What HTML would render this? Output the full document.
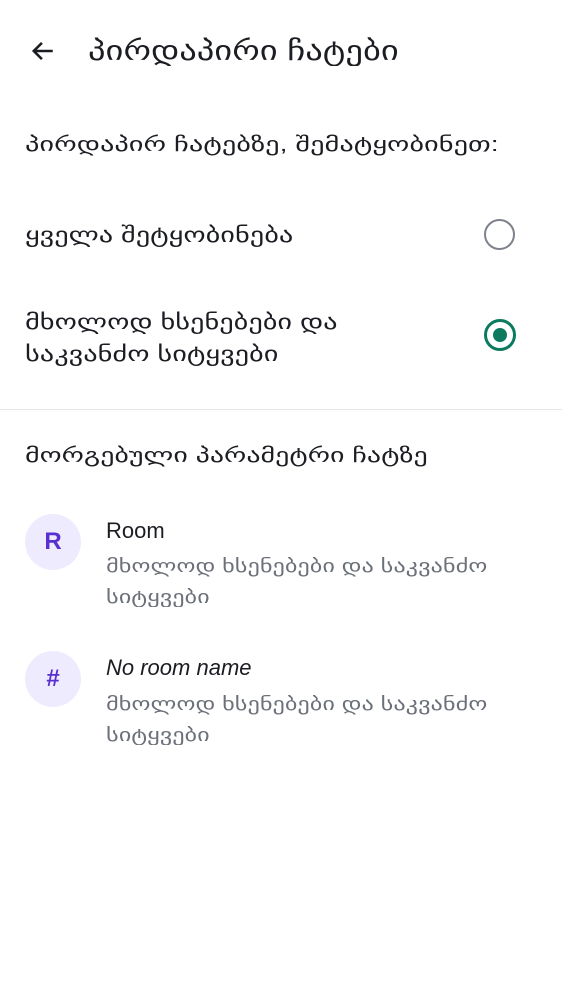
<!DOCTYPE html>
<html><head><meta charset="utf-8"><style>
body{margin:0;width:562px;height:1000px;background:#fff;font-family:"Liberation Sans","DejaVu Sans",sans-serif;color:#1b1d22;position:relative;overflow:hidden}
.a{position:absolute;white-space:nowrap}
.g{transform-origin:0 0}
.t{font-size:22px}
.s{font-size:18px;color:#6b7079;line-height:31px}
.av{position:absolute;left:25px;width:56px;height:56px;border-radius:50%;background:#efebff;color:#5a2fd0;font-weight:bold;font-size:24px;text-align:center;line-height:56px}
</style></head><body>
<svg class="a" style="left:30px;top:38px" width="26" height="26" viewBox="0 0 24 24"><path d="M21 12H4M11 4.5L3.5 12 11 19.5" stroke="#1b1d22" stroke-width="2.4" fill="none"/></svg>
<div class="a g" style="left:88px;top:36px;font-size:27px;transform:scaleX(1.28)">პირდაპირი ჩატები</div>
<div class="a g" style="left:25px;top:132px;font-size:20px;transform:scaleX(1.42)">პირდაპირ ჩატებზე, შემატყობინეთ:</div>
<div class="a g" style="left:25px;top:223px;font-size:21px;transform:scaleX(1.35)">ყველა შეტყობინება</div>
<div class="a" style="left:484px;top:219px;width:31px;height:31px;border:2.5px solid #7d828b;border-radius:50%;box-sizing:border-box"></div>
<div class="a g" style="left:25px;top:307px;font-size:21px;line-height:32px;transform:scaleX(1.35)">მხოლოდ ხსენებები და<br>საკვანძო სიტყვები</div>
<div class="a" style="left:484px;top:319px;width:32px;height:32px;border:3px solid #0b7a5e;border-radius:50%;box-sizing:border-box"><div style="position:absolute;left:6px;top:6px;width:14px;height:14px;border-radius:50%;background:#0b7a5e"></div></div>
<div class="a" style="left:0;top:409px;width:562px;height:1px;background:#e6e7ea"></div>
<div class="a g" style="left:25px;top:443px;font-size:20px;transform:scaleX(1.4)">მორგებული პარამეტრი ჩატზე</div>
<div class="av" style="top:514px">R</div>
<div class="a t" style="left:106px;top:518px">Room</div>
<div class="a s g" style="left:106px;top:551px;transform:scaleX(1.35)">მხოლოდ ხსენებები და საკვანძო<br>სიტყვები</div>
<div class="av" style="top:651px">#</div>
<div class="a t" style="left:106px;top:655px;font-style:italic">No room name</div>
<div class="a s g" style="left:106px;top:689px;transform:scaleX(1.35)">მხოლოდ ხსენებები და საკვანძო<br>სიტყვები</div>
</body></html>
